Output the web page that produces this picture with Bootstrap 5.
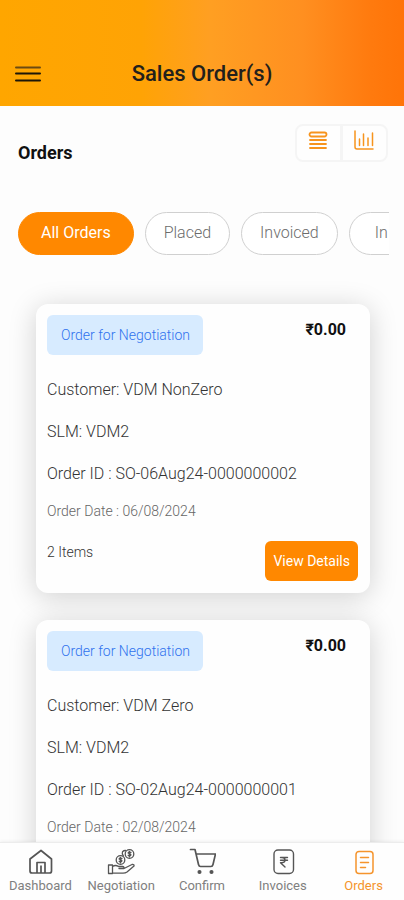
<!DOCTYPE html>
<html lang="en">
<head>
<meta charset="utf-8">
<meta name="viewport" content="width=device-width, initial-scale=1">
<title>Sales Order(s)</title>
<link href="https://cdn.jsdelivr.net/npm/bootstrap@5.3.0/dist/css/bootstrap.min.css" rel="stylesheet">
<style>
body { font-family: Roboto, "Noto Sans", sans-serif; font-size: 16px; background: #fdfdfd; }
button { font-family: inherit; }
.app-header { background: linear-gradient(90deg, #ffa600 0%, #ffa305 35%, #ff9f22 52%, #ff8f20 75%, #ff7a0e 92%, #ff7408 100%); padding: 54px 14px 12px; color: #22201c; }
.app-title { font-size: 22px; line-height: 40px; font-weight: 500; }
.menu-btn, .menu-spacer { width: 28px; }
.page-head { padding: 18px 16px 0 18px; }
.page-title { font-size: 18px; line-height: 24px; font-weight: 700; color: #111; padding-top: 17px; }
.view-switch .btn { width: 47px; height: 38px; border: 2px solid #f5f5f5; border-radius: 8px; background: #fefefe; padding: 0 2px 6px 0; }
.filters { margin: 47px 15px 0 18px; gap: 11px; }
.filter-chip { height: 43px; padding: 0 18px 2px; font-size: 16px; font-weight: 300; line-height: 24px; color: #6c6c6c; background: #fff; border: 1px solid #d0d0d0; }
.filter-chip.wide { padding: 0 25px 2px; }
.filter-chip.active { padding: 0 22px 2px; font-weight: 400; color: #fff; background: #ff8800; border-color: #ff8800; }
.orders { padding: 49px 34px 24px 36px; gap: 27px; }
.order-card { border: 0; border-radius: 12px; background: #fefefe; box-shadow: 0 4px 28px rgba(0,0,0,.18); padding: 11px 12px 12px 11px; color: #333; font-weight: 300; }
.order-status { font-size: 14px; line-height: 20px; padding: 10px 13px 10px 14px; border-radius: 6px; background: #d7ebff; color: #2f72ee; }
.order-price { font-size: 16px; line-height: 20px; font-weight: 700; color: #111; padding: 5px 12px 0 0; }
.order-lines { padding-top: 23px; gap: 18px; font-size: 16px; line-height: 24px; }
.order-date { font-size: 14px; line-height: 20px; color: #666; margin: 15px 0 20px; }
.order-items { font-size: 14px; line-height: 22px; }
.details-btn { height: 40px; padding: 0 8px; border-radius: 6px; font-size: 14px; background: #ff8800; color: #fff; }
.tab-bar { background: #fefefe; border-top: 1px solid #ececec; box-shadow: 0 -1px 3px rgba(0,0,0,.06); padding: 4px 0 5px; z-index: 2; }
.tab-link { width: 20%; color: #808080; font-size: 13px; line-height: 18px; gap: 2px; }
.tab-link svg { color: #555; }
.tab-link.current, .tab-link.current svg { color: #f5942c; }
</style>
<script src="https://cdn.jsdelivr.net/npm/bootstrap@5.3.0/dist/js/bootstrap.bundle.min.js"></script>
</head>
<body class="d-flex flex-column vh-100 overflow-hidden">
<header class="app-header d-flex align-items-center justify-content-between">
  <button class="menu-btn btn p-0 border-0 d-flex" type="button" aria-label="Menu">
    <svg width="28" height="20" viewBox="0 0 28 20" stroke-width="2" stroke-linecap="round"><path d="M2 3.500h24" stroke="#6b4a12"/><path d="M2 9.500h24M2 16.500h24" stroke="#1d1608"/></svg>
  </button>
  <h1 class="app-title m-0">Sales Order(s)</h1>
  <span class="menu-spacer"></span>
</header>

<main class="flex-grow-1 overflow-hidden">
  <div class="page-head d-flex justify-content-between align-items-start">
    <h2 class="page-title m-0">Orders</h2>
    <div class="view-switch btn-group" role="group" aria-label="View">
      <button class="btn" type="button" aria-label="List view">
        <svg width="20" height="20" viewBox="0 0 20 20" fill="none" stroke="#f7941d" stroke-width="1.800" stroke-linecap="round"><rect x="1.500" y="1.500" width="17" height="4" rx="2"/><path d="M2 9h16M2 13h16M2 17h16"/></svg>
      </button>
      <button class="btn" type="button" aria-label="Chart view">
        <svg width="22" height="22" viewBox="0 0 22 22" fill="none" stroke="#f7941d" stroke-width="1.500" stroke-linecap="round" stroke-linejoin="round"><path d="M2 1v16q0 2 2 2h16"/><path d="M6.500 9v6.500M10.500 4v11.500M15 8v7.500M19.500 3v12.500"/></svg>
      </button>
    </div>
  </div>

  <div class="filters d-flex overflow-hidden">
    <button class="filter-chip active btn rounded-pill flex-shrink-0" type="button">All Orders</button>
    <button class="filter-chip btn rounded-pill flex-shrink-0" type="button">Placed</button>
    <button class="filter-chip btn rounded-pill flex-shrink-0" type="button">Invoiced</button>
    <button class="filter-chip wide btn rounded-pill flex-shrink-0" type="button">In</button>
  </div>

  <div class="orders d-flex flex-column">
    <article class="order-card card">
      <div class="d-flex justify-content-between align-items-start">
        <span class="order-status">Order for Negotiation</span>
        <span class="order-price">₹0.00</span>
      </div>
      <div class="order-lines d-flex flex-column">
        <div>Customer: VDM NonZero</div>
        <div>SLM: VDM2</div>
        <div>Order ID : SO-06Aug24-0000000002</div>
      </div>
      <div class="order-date">Order Date : 06/08/2024</div>
      <div class="d-flex justify-content-between align-items-start">
        <span class="order-items">2 Items</span>
        <button class="details-btn btn border-0" type="button">View Details</button>
      </div>
    </article>
    <article class="order-card card">
      <div class="d-flex justify-content-between align-items-start">
        <span class="order-status">Order for Negotiation</span>
        <span class="order-price">₹0.00</span>
      </div>
      <div class="order-lines d-flex flex-column">
        <div>Customer: VDM Zero</div>
        <div>SLM: VDM2</div>
        <div>Order ID : SO-02Aug24-0000000001</div>
      </div>
      <div class="order-date">Order Date : 02/08/2024</div>
    </article>
  </div>
</main>

<nav class="tab-bar d-flex" aria-label="Main">
  <a href="#" class="tab-link d-flex flex-column align-items-center text-decoration-none">
    <svg width="28" height="28" viewBox="0 0 28 28" fill="none" stroke="currentColor" stroke-width="1.700" stroke-linejoin="round"><path d="M4 12 15 3.500 25.500 12v12q0 2-2 2h-17.500q-2 0-2-2z"/><path d="M11 26v-10.500h8v10.500M15 18.500v7.500"/></svg>
    Dashboard
  </a>
  <a href="#" class="tab-link d-flex flex-column align-items-center text-decoration-none">
    <svg width="28" height="28" viewBox="0 0 28 28" fill="none" stroke="currentColor" stroke-width="1.300" stroke-linecap="round" stroke-linejoin="round"><circle cx="22.500" cy="7" r="4.300"/><path d="M24 5.300q-3-.8-2.800.8 2.800.6 2.700 1.800-.8 1.400-2.700.4M22.500 4.300v5.600M15.500 4.700q1.500-1.400 3-1.200M15.500 5q-.8 2 .8 3.800"/><circle cx="13.500" cy="13" r="4.300"/><path d="M15 11.300q-3-.8-2.800.8 2.800.6 2.700 1.800-.8 1.400-2.700.4M13.500 10.300v5.600"/><path d="M1.500 18h4v8.500h-4zM5.500 19.500q3-2 6 0h4q2 .3 1.500 2h-5M17 21.500l8-4q2.500-.4 2 1.500l-7 6q-1.500 1.200-4 1.200h-10.500"/></svg>
    Negotiation
  </a>
  <a href="#" class="tab-link d-flex flex-column align-items-center text-decoration-none">
    <svg width="28" height="28" viewBox="0 0 28 28" fill="none" stroke="currentColor" stroke-width="1.700" stroke-linecap="round" stroke-linejoin="round"><path d="M2.500 2.500H7l3.500 15q.5 2 2 2H23q1.500 0 2-2l2.500-10.500H8.300"/><circle cx="11.500" cy="25" r="1.200" fill="currentColor"/><circle cx="23.500" cy="25" r="1.200" fill="currentColor"/></svg>
    Confirm
  </a>
  <a href="#" class="tab-link d-flex flex-column align-items-center text-decoration-none">
    <svg width="28" height="28" viewBox="0 0 28 28" fill="none" stroke="currentColor" stroke-width="1.400" stroke-linecap="round" stroke-linejoin="round"><rect x="5" y="3" width="19.500" height="23.500" rx="4"/><path d="M11.500 10.500h7M11.500 13.300h7M11.500 10.500h1.500q3 0 3 2.600t-3 2.600H11.500l4.500 4.300"/></svg>
    Invoices
  </a>
  <a href="#" class="tab-link current d-flex flex-column align-items-center text-decoration-none" aria-current="page">
    <svg width="28" height="28" viewBox="0 0 28 28" fill="none" stroke="currentColor" stroke-width="1.500" stroke-linecap="round"><rect x="6" y="4.500" width="17" height="22" rx="3"/><path d="M10.500 10.500h8M10.500 15.500h8M10.500 20.500h5"/></svg>
    Orders
  </a>
</nav>
</body>
</html>
